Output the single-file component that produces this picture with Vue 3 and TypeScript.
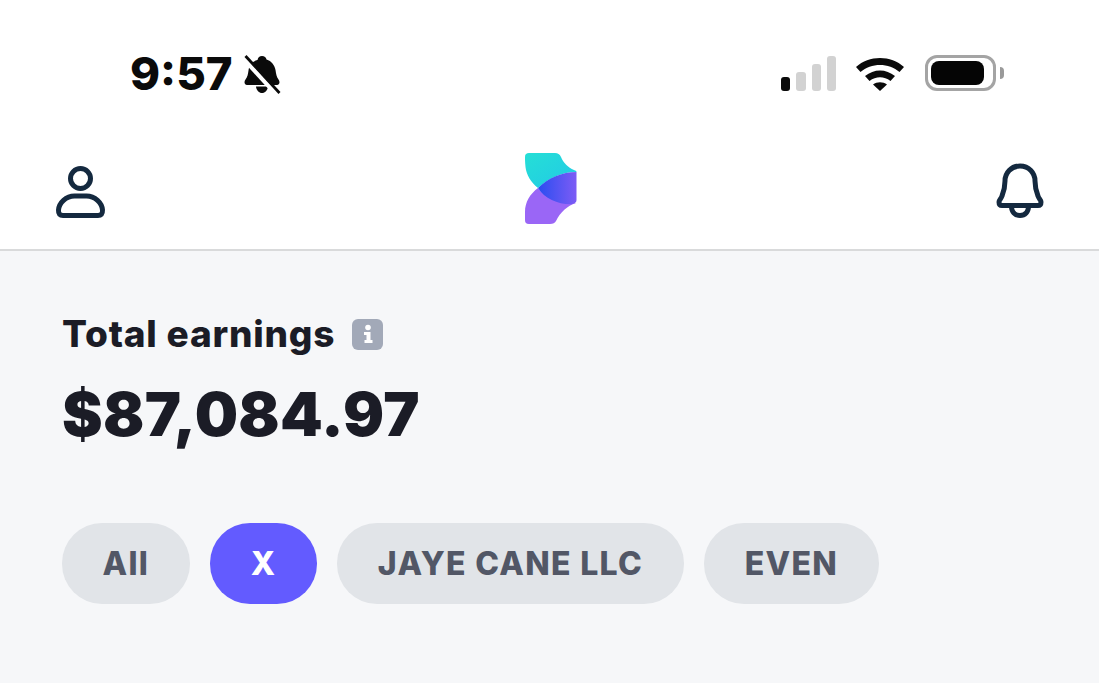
<script setup lang="ts">
interface Chip { label: string; active?: boolean }
const chips: Chip[] = [
  { label: 'All' },
  { label: 'X', active: true },
  { label: 'JAYE CANE LLC' },
  { label: 'EVEN' },
]
const bars = [
  { h: 14, on: true },
  { h: 19, on: false },
  { h: 27, on: false },
  { h: 35, on: false },
]
</script>

<template>
  <div class="screen">
    <div class="status">
      <div class="status-left">
        <span class="time">9:57</span>
        <svg class="mute" width="38" height="40" viewBox="0 0 38 40">
          <path d="M19 1c2.500 0 4 1.500 4.500 3.500 5 1.500 8 5.500 9 10.500.6 4 1 7 3 9.500 1.500 2 1.500 5-1.500 5.500H4c-3-.5-3-3.500-1.500-5.500 2-2.500 2.500-5.500 3-9 .5-5 4-9.500 9-10.500C15 2.500 16.500 1 19 1z" fill="#0a0a0a"/>
          <path d="M13 31.500h12c-.5 4-3 6.500-6 6.500s-5.500-2.500-6-6.500z" fill="#0a0a0a"/>
          <path d="M1 4l33 36" stroke="#fff" stroke-width="4.500"/>
          <path d="M2.500 1l34 37" stroke="#0a0a0a" stroke-width="2.800"/>
        </svg>
      </div>
      <div class="status-right">
        <div class="signal">
          <span
            v-for="(b, i) in bars"
            :key="i"
            class="bar"
            :class="{ on: b.on }"
            :style="{ height: b.h + 'px' }"
          ></span>
        </div>
        <svg class="wifi" width="50" height="36" viewBox="0 0 50 36">
          <path d="M1 12C14 0 36 0 49 12l-4.500 5C34 7.500 16 7.500 5.500 17z" fill="#0a0a0a"/>
          <path d="M10 21c9-7.500 21-7.500 30 0l-4.500 5c-6.500-5-14.500-5-21 0z" fill="#0a0a0a"/>
          <path d="M18 29.500c4-3 10-3 14 0L25 36z" fill="#0a0a0a"/>
        </svg>
        <div class="battery">
          <div class="battery-body"><div class="battery-fill"></div></div>
          <div class="battery-cap"></div>
        </div>
      </div>
    </div>

    <header class="topbar">
      <svg class="icon-user" width="52" height="56" viewBox="0 0 52 56" fill="none" stroke="#14293f" stroke-width="5">
        <circle cx="25.500" cy="14.500" r="10"/>
        <path d="M19.500 32h12c8.500 0 15.500 7 16 14 .2 4-1.500 5.500-4.500 5.500H8c-3 0-4.700-1.500-4.500-5.500C4 39 11 32 19.500 32z"/>
      </svg>
      <svg class="logo" width="60" height="80" viewBox="0 0 60 80">
        <defs>
          <linearGradient id="teal" x1="0" y1="0" x2="1" y2="1">
            <stop offset="0" stop-color="#25dfd6"/>
            <stop offset="1" stop-color="#22c9e6"/>
          </linearGradient>
          <linearGradient id="mid" x1="0" y1="0.5" x2="1" y2="0.5">
            <stop offset="0" stop-color="#2a4df0"/>
            <stop offset="1" stop-color="#7d5cf5"/>
          </linearGradient>
        </defs>
        <path d="M8 3h26c3 0 4.500 1 6 4 2.500 6 7 10.500 13 13 1.500.5 2.500 1 2.500 2-14 0-28 6-38.500 16C9.500 32 5.500 25 4.500 17 4 12 4 9 4 7c0-3 1.500-4 4-4z" fill="url(#teal)"/>
        <path d="M4 70V62C4 52 9 44 17 38c6 9 20 15 38 15-9 3-15.500 9-20 18-1 2-3 3-6 3H8c-3 0-4-1.500-4-4z" fill="#9a66f6"/>
        <path d="M17 38c10-10 24-16 38.500-16v28c0 2-1 3-3 3.500-1 .3-2 .5-3 .8-13 0-26-6-32.500-16.300z" fill="url(#mid)"/>
      </svg>
      <svg class="icon-bell" width="52" height="60" viewBox="0 0 52 60" fill="none" stroke="#14293f" stroke-width="5" stroke-linejoin="round">
        <path d="M25 4c9 0 15 7 15 15 0 6 1 10 3 15 1 3 3 4 3 6 0 2-1 3.500-3 3.500H7c-2 0-3-1.500-3-3.500 0-2 2-3 3-6 2-5 3-9 3-15C10 11 16 4 25 4z"/>
        <path d="M16.500 44c0 6 3.500 9.500 8.500 9.500s8.500-3.500 8.500-9.500"/>
      </svg>
    </header>

    <main class="content">
      <div class="label-row">
        <span class="label">Total earnings</span>
        <span class="info">
          <svg width="14" height="22" viewBox="0 0 14 20" fill="#fff">
            <circle cx="7" cy="3.500" r="2.800"/>
            <path d="M3 8h6.500v8H11.500v3h-8v-3H5.500v-5H3z"/>
          </svg>
        </span>
      </div>
      <div class="amount">$87,084.97</div>
      <div class="chips">
        <button v-for="c in chips" :key="c.label" class="chip" :class="{ active: c.active }">{{ c.label }}</button>
      </div>
    </main>
  </div>
</template>

<style scoped>
.screen {
  width: 1099px;
  height: 683px;
  display: flex;
  flex-direction: column;
  background: #fff;
  font-family: Inter, "Liberation Sans", sans-serif;
  overflow: hidden;
}
.status {
  height: 134px;
  flex: none;
  display: flex;
  justify-content: space-between;
  align-items: flex-start;
  padding: 50px 95px 0 130px;
  box-sizing: border-box;
}
.status-left {
  display: flex;
  align-items: center;
  gap: 10px;
}
.time {
  font-size: 45.500px;
  line-height: 48px;
  font-weight: 800;
  color: #0a0a0a;
}
.mute {
  margin-top: 1px;
}
.status-right {
  display: flex;
  align-items: flex-end;
  padding-top: 5px;
}
.signal {
  display: flex;
  align-items: flex-end;
  gap: 6px;
  height: 36px;
}
.bar {
  width: 9.250px;
  border-radius: 3px;
  background: #d2d2d2;
}
.bar.on {
  background: #0a0a0a;
}
.wifi {
  margin-left: 19px;
}
.battery {
  display: flex;
  align-items: center;
  margin-left: 20px;
}
.battery-body {
  width: 71px;
  height: 36px;
  box-sizing: border-box;
  border: 3px solid #a4a4a4;
  border-radius: 12px;
  padding: 3px;
}
.battery-fill {
  width: 53px;
  height: 100%;
  background: #050505;
  border-radius: 8px;
}
.battery-cap {
  width: 4px;
  height: 12px;
  margin-left: 4px;
  background: #9a9a9a;
  border-radius: 0 5px 5px 0;
}
.topbar {
  height: 117px;
  flex: none;
  box-sizing: border-box;
  border-bottom: 2px solid #d9dadb;
  display: flex;
  justify-content: space-between;
  align-items: flex-start;
  padding: 18px 52px 0 55px;
  position: relative;
}
.icon-user {
  margin-top: 12px;
}
.logo {
  margin-top: -2px;
}
.icon-bell {
  margin-top: 10px;
}
.content {
  flex: 1;
  background: #f6f7f9;
  padding: 63px 62px 0;
}
.label-row {
  display: flex;
  align-items: center;
  gap: 17px;
  height: 40px;
}
.label {
  font-size: 37px;
  font-weight: 800;
  color: #1b1c26;
  line-height: 40px;
  letter-spacing: 0.8px;
}
.info {
  width: 31px;
  height: 31px;
  border-radius: 6px;
  background: #a2a9b8;
  display: flex;
  align-items: center;
  justify-content: center;
}
.amount {
  margin-top: 25px;
  font-size: 61px;
  line-height: 70px;
  font-weight: 900;
  color: #1b1c26;
  letter-spacing: 0.3px;
}
.chips {
  display: flex;
  gap: 20.500px;
  margin-top: 74px;
}
.chip {
  height: 81px;
  padding: 0 40.500px;
  border: none;
  border-radius: 40px;
  background: #e1e4e8;
  color: #525766;
  font-family: inherit;
  font-size: 32px;
  font-weight: 800;
  letter-spacing: 1.300px;
}
.chip.active {
  background: #635bff;
  color: #fff;
}
</style>
